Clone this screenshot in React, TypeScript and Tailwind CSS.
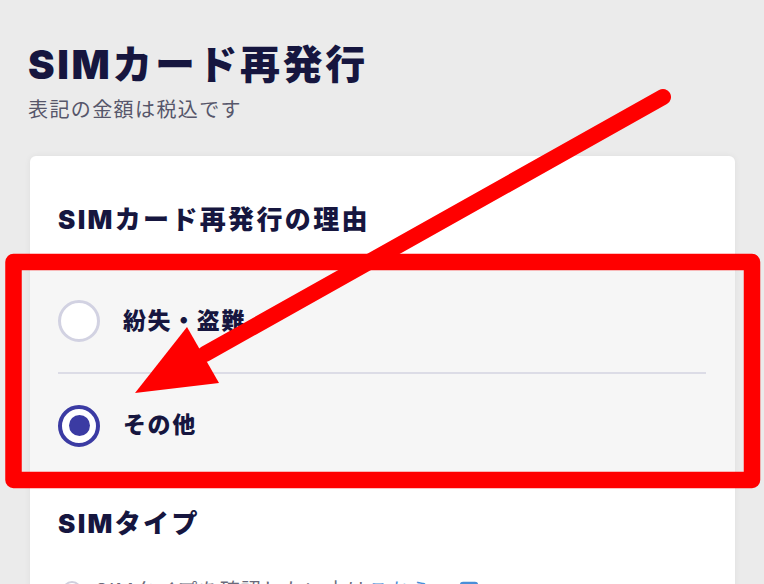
import React from "react";

const FONT = { fontFamily: 'Inter, "Noto Sans CJK JP", sans-serif' };

function Radio({ checked }: { checked?: boolean }) {
  if (checked) {
    return (
      <div className="w-[42px] h-[42px] rounded-full border-[4px] border-[#3b3ba3] bg-white flex items-center justify-center shrink-0">
        <div className="w-[21px] h-[21px] rounded-full bg-[#3b3ba3]" />
      </div>
    );
  }
  return <div className="w-[42px] h-[42px] rounded-full border-[3px] border-[#d2d2e2] bg-white shrink-0" />;
}

export default function App() {
  return (
    <div className="relative w-[764px] h-[584px] overflow-hidden bg-[#ebebeb] text-[#16163f]" style={FONT}>
      <div className="pl-[28px] pt-[41px]">
        <h1 className="text-[40px] leading-[48px] font-black tracking-[0.065em]">SIMカード再発行</h1>
        <p className="mt-[7px] text-[20px] leading-[28px] tracking-[0.07em] text-[#56566a]">表記の金額は税込です</p>
      </div>

      <div className="ml-[30px] mr-[29px] mt-[32px] bg-white rounded-md shadow-[0_0_6px_rgba(0,0,0,0.06)]">
        <div className="pt-[46px] px-[28px]">
          <h2 className="text-[26px] leading-[36px] font-black tracking-[0.09em]">SIMカード再発行の理由</h2>
        </div>

        <div className="mt-[32px] bg-[#f6f6f6] px-[28px]">
          <div className="h-[102px] flex items-center gap-[23px] pr-[1px]">
            <Radio />
            <span className="text-[23px] font-black tracking-[0.07em]">紛失・盗難</span>
          </div>
          <div className="h-[2px] bg-[#dcdce6] mr-[1px]" />
          <div className="h-[103px] flex items-center gap-[23px]">
            <Radio checked />
            <span className="text-[23px] font-black tracking-[0.07em]">その他</span>
          </div>
        </div>

        <div className="pt-[29px] px-[28px]">
          <h2 className="text-[26px] leading-[36px] font-black tracking-[0.09em]">SIMタイプ</h2>
          <div className="mt-[35px] flex items-center gap-[13px] pl-[4px] h-[28px]">
            <div className="w-[20px] h-[20px] rounded-full border-[2px] border-[#cfcfdd] bg-white" />
            <span className="text-[20px] leading-[28px] tracking-[0.06em] text-[#6a6a7a]">
              SIMタイプを確認したい方は<span className="text-[#4a8fd8]">こちら</span>
            </span>
            <svg width="20" height="20" viewBox="0 0 20 20" className="ml-[14px]">
              <rect x="2" y="2" width="16" height="16" rx="2" fill="none" stroke="#4a8fd8" strokeWidth="2.5" />
            </svg>
          </div>
          <div className="h-[40px]" />
        </div>
      </div>

      <svg className="absolute inset-0 pointer-events-none" width="764" height="584" viewBox="0 0 764 584">
        <rect x="13.5" y="262" width="738.5" height="218" fill="none" stroke="#ff0000" strokeWidth="16.5" strokeLinejoin="round" />
        <line x1="663" y1="97" x2="205" y2="354" stroke="#ff0000" strokeWidth="16" strokeLinecap="round" />
        <polygon points="135,393 187,327 219,383" fill="#ff0000" />
      </svg>
    </div>
  );
}
